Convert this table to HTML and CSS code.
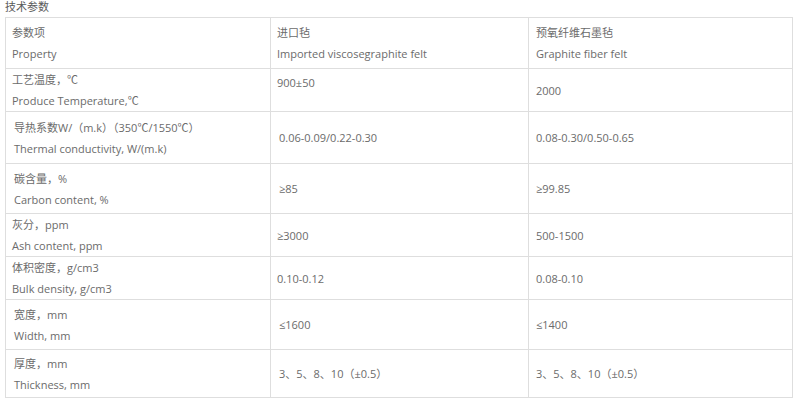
FILE: index.html
```html
<!DOCTYPE html>
<html lang="zh">
<head>
<meta charset="utf-8">
<title>技术参数</title>
<link rel="stylesheet" href="styles.css">
</head>
<body>
<div class="page">
  <div class="title">技术参数</div>
  <table class="spec">
    <colgroup>
      <col class="c1"><col class="c2"><col class="c3">
    </colgroup>
    <tbody>
      <tr class="r1">
        <td><p>参数项</p><p>Property</p></td>
        <td><p>进口毡</p><p>Imported viscosegraphite felt</p></td>
        <td><p>预氧纤维石墨毡</p><p>Graphite fiber felt</p></td>
      </tr>
      <tr class="r2">
        <td><p>工艺温度，℃</p><p>Produce Temperature,℃</p></td>
        <td class="top"><p>900±50</p></td>
        <td><p>2000</p></td>
      </tr>
      <tr class="r3">
        <td class="in"><p>导热系数W/（m.k）（350℃/1550℃）</p><p>Thermal conductivity, W/(m.k)</p></td>
        <td class="in"><p>0.06-0.09/0.22-0.30</p></td>
        <td><p>0.08-0.30/0.50-0.65</p></td>
      </tr>
      <tr class="r4">
        <td class="in"><p>碳含量，%</p><p>Carbon content, %</p></td>
        <td class="in"><p>≥85</p></td>
        <td><p>≥99.85</p></td>
      </tr>
      <tr class="r5">
        <td><p>灰分，ppm</p><p>Ash content, ppm</p></td>
        <td><p>≥3000</p></td>
        <td><p>500-1500</p></td>
      </tr>
      <tr class="r6">
        <td><p>体积密度，g/cm3</p><p>Bulk density, g/cm3</p></td>
        <td><p>0.10-0.12</p></td>
        <td><p>0.08-0.10</p></td>
      </tr>
      <tr class="r7">
        <td class="in"><p>宽度，mm</p><p>Width, mm</p></td>
        <td class="in"><p>≤1600</p></td>
        <td><p>≤1400</p></td>
      </tr>
      <tr class="r8">
        <td class="in"><p>厚度，mm</p><p>Thickness, mm</p></td>
        <td class="in"><p>3、5、8、10（±0.5）</p></td>
        <td><p>3、5、8、10（±0.5）</p></td>
      </tr>
    </tbody>
  </table>
</div>
</body>
</html>
```
FILE: styles.css
```css
html, body {
  margin: 0;
  padding: 0;
  background: #fff;
}
body {
  font-family: "Open Sans", "Noto Sans CJK SC", sans-serif;
  font-size: 11px;
  color: #6b6b6b;
}
.page {
  padding: 0 9px 0 5px;
}
.title {
  height: 17px;
  line-height: 13px;
  color: #5a5a5a;
}
.spec {
  border-collapse: collapse;
  width: 787px;
  table-layout: fixed;
}
.c1 { width: 265px; }
.c2 { width: 258px; }
.c3 { width: 264px; }
.spec td {
  border: 1px solid #dedede;
  padding: 0 4px 0 6px;
  vertical-align: middle;
}
.spec td:nth-child(3) { padding-left: 7px; }
.spec td.in { padding-left: 8px; }
.spec p {
  margin: 0;
  line-height: 21px;
  white-space: nowrap;
}
.spec td.top { vertical-align: top; padding-top: 3px; }
.r1 { height: 51px; }
.r2 { height: 42px; }
.r3 { height: 52px; }
.r4 { height: 50px; }
.r5 { height: 43px; }
.r6 { height: 43px; }
.r7 { height: 50px; }
.r8 { height: 48px; }
```
